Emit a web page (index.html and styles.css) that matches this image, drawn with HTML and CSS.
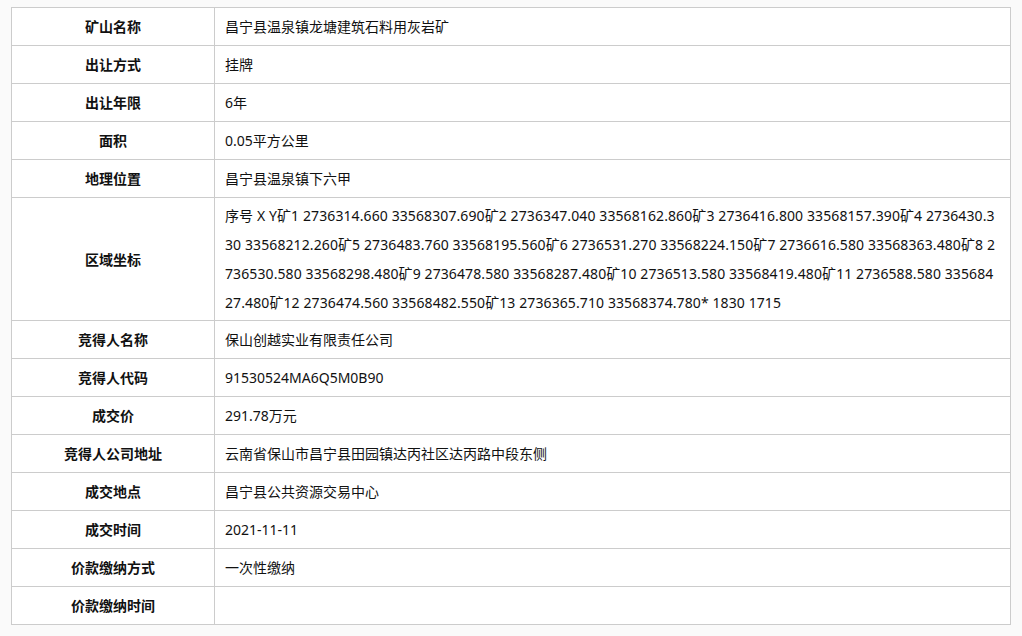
FILE: index.html
```html
<!DOCTYPE html>
<html lang="zh-CN">
<head>
  <meta charset="UTF-8" />
  <title>采矿权出让结果</title>
  <link rel="stylesheet" href="styles.css">
</head>
<body>
  <!-- 出让结果表 -->
  <table class="info-table">
    <colgroup>
      <col class="col-label">
      <col>
    </colgroup>
    <tr><th>矿山名称</th><td>昌宁县温泉镇龙塘建筑石料用灰岩矿</td></tr>
    <tr><th>出让方式</th><td>挂牌</td></tr>
    <tr><th>出让年限</th><td>6年</td></tr>
    <tr><th>面积</th><td>0.05平方公里</td></tr>
    <tr><th>地理位置</th><td>昌宁县温泉镇下六甲</td></tr>
    <tr class="tall"><th>区域坐标</th><td class="coords">序号 X Y矿1 2736314.660 33568307.690矿2 2736347.040 33568162.860矿3 2736416.800 33568157.390矿4 2736430.330 33568212.260矿5 2736483.760 33568195.560矿6 2736531.270 33568224.150矿7 2736616.580 33568363.480矿8 2736530.580 33568298.480矿9 2736478.580 33568287.480矿10 2736513.580 33568419.480矿11 2736588.580 33568427.480矿12 2736474.560 33568482.550矿13 2736365.710 33568374.780* 1830 1715</td></tr>
    <tr><th>竞得人名称</th><td>保山创越实业有限责任公司</td></tr>
    <tr><th>竞得人代码</th><td>91530524MA6Q5M0B90</td></tr>
    <tr><th>成交价</th><td>291.78万元</td></tr>
    <tr><th>竞得人公司地址</th><td>云南省保山市昌宁县田园镇达丙社区达丙路中段东侧</td></tr>
    <tr><th>成交地点</th><td>昌宁县公共资源交易中心</td></tr>
    <tr><th>成交时间</th><td>2021-11-11</td></tr>
    <tr><th>价款缴纳方式</th><td>一次性缴纳</td></tr>
    <tr><th>价款缴纳时间</th><td></td></tr>
  </table>
</body>
</html>
```

FILE: styles.css
```css
body {
  margin: 0;
  padding: 7px 11px;
  background: #fafafa;
  font-family: 'Noto Sans', 'Noto Sans CJK SC', sans-serif;
  font-size: 14px;
  color: #111;
}

/* 表格 */
.info-table {
  width: 1000px;
  border-collapse: collapse;
  table-layout: fixed;
  background: #fff;
}

.col-label {
  width: 203px;
}

.info-table tr {
  height: 38px;
}

.info-table th,
.info-table td {
  border: 1px solid #ccc;
  padding: 3px 10px;
  line-height: 29px;
  vertical-align: middle;
}

.info-table th {
  font-weight: bold;
  text-align: center;
}

.info-table td {
  text-align: left;
}

.coords {
  word-break: break-all;
  letter-spacing: 0.1px;
}
```
